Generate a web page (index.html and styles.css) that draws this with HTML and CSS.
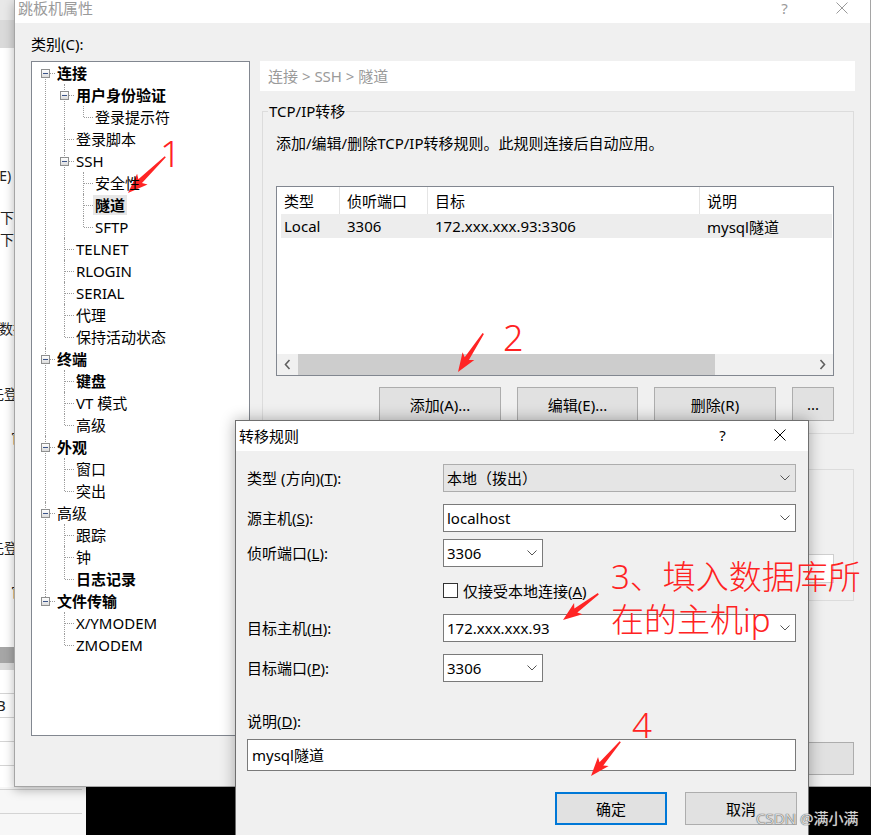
FILE: index.html
```html
<!DOCTYPE html>
<html lang="zh-CN">
<head>
<meta charset="utf-8">
<title>跳板机属性</title>
<link rel="stylesheet" href="styles.css">
</head>
<body>
<div class="desktop">
  <div class="bgapp">
    <div class="bg-cap1"></div>
    <div class="bg-cap2"></div>
    <div class="frag f-e">(E)</div>
    <div class="frag f-x1">下载</div>
    <div class="frag f-x2">下载</div>
    <div class="frag f-sj">数据</div>
    <div class="frag f-dl1">先登录</div>
    <div class="frag f-g1">官网</div>
    <div class="frag f-dl2">先登录</div>
    <div class="frag f-g2">官网</div>
    <div class="bg-band"></div>
    <div class="bg-band2"></div>
    <div class="bg-trow"></div>
    <div class="bg-trow bg-b">B</div>
    <div class="bg-trow"></div>
    <div class="bg-trow"></div>
  </div>
  <div class="bottom-strip">
    <div class="bs-left"><div class="bs-l1"></div><div class="bs-l2"></div></div>
    <div class="bs-black"></div>
  </div>

  <section class="win main-win">
    <header class="titlebar">
      <span class="title">跳板机属性</span>
      <span class="capbtn help">?</span>
      <span class="capbtn close"><svg width="12" height="12" viewBox="0 0 12 12"><path d="M0.5 0.5L11.5 11.5M11.5 0.5L0.5 11.5" stroke="#9a9a9a" stroke-width="1" fill="none"/></svg></span>
    </header>
    <div class="main-client">
      <div class="left-col">
        <div class="cat-label">类别(C):</div>
        <div class="tree">
          <ul class="tree-root">
            <li><div class="node"><span class="gut"><span class="exp"></span></span><span class="lbl b">连接</span></div>
              <ul>
                <li><div class="node"><span class="gut"><span class="exp"></span></span><span class="lbl b">用户身份验证</span></div>
                  <ul>
                    <li><div class="node"><span class="gut"></span><span class="lbl">登录提示符</span></div></li>
                  </ul>
                </li>
                <li><div class="node"><span class="gut"></span><span class="lbl">登录脚本</span></div></li>
                <li><div class="node"><span class="gut"><span class="exp"></span></span><span class="lbl">SSH</span></div>
                  <ul>
                    <li><div class="node"><span class="gut"></span><span class="lbl">安全性</span></div></li>
                    <li><div class="node"><span class="gut"></span><span class="lbl b sel">隧道</span></div></li>
                    <li><div class="node"><span class="gut"></span><span class="lbl">SFTP</span></div></li>
                  </ul>
                </li>
                <li><div class="node"><span class="gut"></span><span class="lbl">TELNET</span></div></li>
                <li><div class="node"><span class="gut"></span><span class="lbl">RLOGIN</span></div></li>
                <li><div class="node"><span class="gut"></span><span class="lbl">SERIAL</span></div></li>
                <li><div class="node"><span class="gut"></span><span class="lbl">代理</span></div></li>
                <li><div class="node"><span class="gut"></span><span class="lbl">保持活动状态</span></div></li>
              </ul>
            </li>
            <li><div class="node"><span class="gut"><span class="exp"></span></span><span class="lbl b">终端</span></div>
              <ul>
                <li><div class="node"><span class="gut"></span><span class="lbl b">键盘</span></div></li>
                <li><div class="node"><span class="gut"></span><span class="lbl">VT 模式</span></div></li>
                <li><div class="node"><span class="gut"></span><span class="lbl">高级</span></div></li>
              </ul>
            </li>
            <li><div class="node"><span class="gut"><span class="exp"></span></span><span class="lbl b">外观</span></div>
              <ul>
                <li><div class="node"><span class="gut"></span><span class="lbl">窗口</span></div></li>
                <li><div class="node"><span class="gut"></span><span class="lbl">突出</span></div></li>
              </ul>
            </li>
            <li><div class="node"><span class="gut"><span class="exp"></span></span><span class="lbl">高级</span></div>
              <ul>
                <li><div class="node"><span class="gut"></span><span class="lbl">跟踪</span></div></li>
                <li><div class="node"><span class="gut"></span><span class="lbl">钟</span></div></li>
                <li><div class="node"><span class="gut"></span><span class="lbl b">日志记录</span></div></li>
              </ul>
            </li>
            <li><div class="node"><span class="gut"><span class="exp"></span></span><span class="lbl b">文件传输</span></div>
              <ul>
                <li><div class="node"><span class="gut"></span><span class="lbl">X/YMODEM</span></div></li>
                <li><div class="node"><span class="gut"></span><span class="lbl">ZMODEM</span></div></li>
              </ul>
            </li>
          </ul>
        </div>
      </div>
      <div class="right-col">
        <div class="crumb">连接 &gt; SSH &gt; 隧道</div>
        <fieldset class="group g1">
          <legend>TCP/IP转移</legend>
          <p class="desc">添加/编辑/删除TCP/IP转移规则。此规则连接后自动应用。</p>
          <div class="listview">
            <div class="lv-head">
              <span class="c1">类型</span><span class="c2">侦听端口</span><span class="c3">目标</span><span class="c4">说明</span>
            </div>
            <div class="lv-row">
              <span class="c1">Local</span><span class="c2">3306</span><span class="c3">172.xxx.xxx.93:3306</span><span class="c4">mysql隧道</span>
            </div>
            <div class="lv-fill"></div>
            <div class="hscroll">
              <span class="sb-arrow"><svg width="7" height="11" viewBox="0 0 7 11"><path d="M5.5 1L1.5 5.5L5.5 10" stroke="#606060" stroke-width="1.6" fill="none"/></svg></span>
              <span class="sb-thumb"></span>
              <span class="sb-track"></span>
              <span class="sb-arrow"><svg width="7" height="11" viewBox="0 0 7 11"><path d="M1.5 1L5.5 5.5L1.5 10" stroke="#606060" stroke-width="1.6" fill="none"/></svg></span>
            </div>
          </div>
          <div class="btn-row">
            <button class="btn w122">添加(A)...</button>
            <button class="btn w121">编辑(E)...</button>
            <button class="btn w122">删除(R)</button>
            <button class="btn w42">...</button>
          </div>
        </fieldset>
        <fieldset class="group g2">
          <div class="g2-box"></div>
        </fieldset>
        <div class="main-foot">
          <button class="btn foot-btn">取消</button>
        </div>
      </div>
    </div>
  </section>

  <section class="win dialog">
    <header class="dlg-title">
      <span class="title">转移规则</span>
      <span class="capbtn help">?</span>
      <span class="capbtn close"><svg width="12" height="12" viewBox="0 0 12 12"><path d="M0.5 0.5L11.5 11.5M11.5 0.5L0.5 11.5" stroke="#000" stroke-width="1" fill="none"/></svg></span>
    </header>
    <div class="dlg-body">
      <div class="frow r1">
        <span class="flabel">类型 (方向)(<u>T</u>):</span>
        <span class="combo wide disabled"><span class="ctext">本地（拨出）</span><svg class="chev" width="10" height="6" viewBox="0 0 10 6"><path d="M0.5 0.5L5 5L9.5 0.5" stroke="#555" stroke-width="1" fill="none"/></svg></span>
      </div>
      <div class="frow r2">
        <span class="flabel">源主机(<u>S</u>):</span>
        <span class="combo wide"><span class="ctext">localhost</span><svg class="chev" width="10" height="6" viewBox="0 0 10 6"><path d="M0.5 0.5L5 5L9.5 0.5" stroke="#555" stroke-width="1" fill="none"/></svg></span>
      </div>
      <div class="frow r3">
        <span class="flabel">侦听端口(<u>L</u>):</span>
        <span class="combo small"><span class="ctext">3306</span><svg class="chev" width="10" height="6" viewBox="0 0 10 6"><path d="M0.5 0.5L5 5L9.5 0.5" stroke="#555" stroke-width="1" fill="none"/></svg></span>
      </div>
      <div class="frow r4">
        <span class="flabel"></span>
        <span class="check"><span class="cbox"></span><span class="clabel">仅接受本地连接(<u>A</u>)</span></span>
      </div>
      <div class="frow r5">
        <span class="flabel">目标主机(<u>H</u>):</span>
        <span class="combo wide"><span class="ctext">172.xxx.xxx.93</span><svg class="chev" width="10" height="6" viewBox="0 0 10 6"><path d="M0.5 0.5L5 5L9.5 0.5" stroke="#555" stroke-width="1" fill="none"/></svg></span>
      </div>
      <div class="frow r6">
        <span class="flabel">目标端口(<u>P</u>):</span>
        <span class="combo small"><span class="ctext">3306</span><svg class="chev" width="10" height="6" viewBox="0 0 10 6"><path d="M0.5 0.5L5 5L9.5 0.5" stroke="#555" stroke-width="1" fill="none"/></svg></span>
      </div>
      <div class="desc-label">说明(<u>D</u>):</div>
      <div class="textfield">mysql隧道</div>
      <div class="dlg-btns">
        <button class="btn dbtn default">确定</button>
        <button class="btn dbtn">取消</button>
      </div>
    </div>
  </section>

  <svg class="marks" width="871" height="835" viewBox="0 0 871 835" aria-hidden="true">
    <g fill="#ff2424">
      <polygon transform="translate(128 193) rotate(135.8)" points="-52,-0.8 -17,-2.6 -20,-7.5 0,0 -20,7.5 -17,2.6 -52,0.8"/>
      <polygon transform="translate(458 372) rotate(123.3)" points="-46,-0.8 -16,-2.5 -19,-7 0,0 -19,7 -16,2.5 -46,0.8"/>
      <polygon transform="translate(563 620) rotate(143.4)" points="-44,-0.8 -16,-2.5 -19,-7 0,0 -19,7 -16,2.5 -44,0.8"/>
      <polygon transform="translate(591 776) rotate(130.5)" points="-45,-0.8 -16,-2.5 -19,-7 0,0 -19,7 -16,2.5 -45,0.8"/>
    </g>
  </svg>
  <div class="note n1">1</div>
  <div class="note n2">2</div>
  <div class="note n3">3、填入数据库所<br>在的主机ip</div>
  <div class="note n4">4</div>
  <div class="watermark">CSDN @满小满</div>
</div>
</body>
</html>
```

FILE: styles.css
```css
* { box-sizing: border-box; }
html, body { margin: 0; padding: 0; }
body {
  width: 871px;
  height: 835px;
  overflow: hidden;
  background: #fff;
  font-family: "Noto Sans", "Noto Sans CJK SC", sans-serif;
  font-size: 15px;
  color: #000;
}
.desktop {
  position: relative;
  width: 871px;
  height: 835px;
  display: flex;
  flex-direction: column;
  overflow: hidden;
}

/* background application (behind windows) */
.bgapp {
  height: 787px;
  flex: none;
  display: flex;
  flex-direction: column;
  background: #fff;
  font-size: 14px;
  line-height: 22px;
  color: #222;
}
.bg-cap1 { height: 20px; background: #e8e8e8; }
.bg-cap2 { height: 28px; background: #dadada; }
.frag { height: 22px; white-space: nowrap; }
.f-e { margin-top: 117px; text-indent: -5px; }
.f-x1 { margin-top: 20px; }
.f-sj { margin-top: 67px; text-indent: -1px; }
.f-dl1 { margin-top: 43px; text-indent: -10px; }
.f-g1 { margin-top: 22px; text-indent: 11px; }
.f-dl2 { margin-top: 88px; text-indent: -10px; }
.f-g2 { margin-top: 22px; text-indent: 11px; }
.bg-band { margin-top: 44px; height: 16px; background: #a6a6a6; }
.bg-band2 { height: 7px; background: #dcdcdc; }
.bg-trow { height: 24px; width: 82px; border-bottom: 1px solid #d4d4d4; }
.bg-b { text-indent: -4px; font-size: 15px; line-height: 23px; }

.bottom-strip { flex: 1; display: flex; }
.bs-left { width: 86px; background: #f7f7f7; }
.bs-l1 { width: 82px; height: 3px; border-bottom: 1px solid #d4d4d4; }
.bs-l2 { width: 82px; height: 24px; border-bottom: 1px solid #d4d4d4; }
.bs-black { flex: 1; background: #000; }

/* windows */
.win { position: absolute; display: flex; flex-direction: column; }
.capbtn {
  width: 57px;
  flex: none;
  display: flex;
  align-items: center;
  justify-content: center;
  font-size: 15px;
}

.main-win {
  left: 14px;
  top: 0;
  width: 857px;
  height: 787px;
  background: #f0f0f0;
  border: 1px solid #a5a5a5;
  border-top: none;
  box-shadow: 0 3px 10px rgba(0, 0, 0, 0.28);
}
.titlebar {
  height: 23px;
  flex: none;
  display: flex;
  align-items: flex-start;
  background: #fff;
  color: #9a9a9a;
}
.titlebar .title { flex: 1; padding-left: 3px; line-height: 16px; }
.titlebar .capbtn { height: 16px; }

.main-client {
  flex: 1;
  display: flex;
  gap: 10px;
  padding: 11px 15px 0 16px;
}
.left-col { width: 219px; flex: none; display: flex; flex-direction: column; }
.cat-label { line-height: 20px; height: 20px; margin-bottom: 7px; }
.tree {
  height: 675px;
  background: #fff;
  border: 1px solid #828790;
  overflow: hidden;
}

/* tree */
.tree ul { list-style: none; margin: 0; padding: 0; }
.tree ul ul { padding-left: 19px; }
.tree li { position: relative; }
.tree li::before {
  content: "";
  position: absolute;
  left: 13px;
  top: 0;
  bottom: 0;
  border-left: 1px dotted #9c9c9c;
}
.tree li:last-child::before { bottom: auto; height: 11px; }
.tree-root > li:first-child::before { top: 11px; }
.node {
  position: relative;
  height: 22px;
  display: flex;
  align-items: center;
  white-space: nowrap;
}
.node::after {
  content: "";
  position: absolute;
  left: 14px;
  top: 11px;
  width: 9px;
  border-top: 1px dotted #9c9c9c;
}
.gut { width: 23px; flex: none; display: flex; align-items: center; }
.exp {
  position: relative;
  z-index: 1;
  margin-left: 9px;
  width: 9px;
  height: 9px;
  border: 1px solid #8e8f8f;
  background: linear-gradient(#ffffff, #dcdcdc);
  display: flex;
  align-items: center;
  justify-content: center;
}
.exp::after { content: ""; width: 5px; height: 1px; background: #3b5488; }
.lbl {
  position: relative;
  z-index: 1;
  padding: 0 2px;
  line-height: 20px;
  height: 20px;
}
.lbl.b { font-weight: 700; }
.lbl.sel { background: #e6e6e6; }

/* right column */
.right-col { width: 595px; flex: none; display: flex; flex-direction: column; }
.crumb {
  margin-top: 27px;
  height: 30px;
  line-height: 30px;
  background: #fff;
  padding-left: 8px;
  color: #9a9a9a;
}
.group {
  margin: 0 0 0 2px;
  width: 592px;
  border: 1px solid #dcdcdc;
  min-inline-size: 0;
}
.g1 { margin-top: 10px; padding: 0 19px 12px 13px; }
.g1 legend { margin-left: -8px; padding: 0 1px; line-height: 20px; }
.desc { margin: 12px 0 0 0; line-height: 20px; }

.listview {
  margin-top: 33px;
  height: 190px;
  background: #fff;
  border: 1px solid #828790;
  display: flex;
  flex-direction: column;
}
.lv-head, .lv-row { display: flex; white-space: nowrap; }
.lv-head { height: 27px; align-items: center; }
.lv-head span { height: 100%; display: flex; align-items: center; padding-left: 7px; border-right: 1px solid #e5e5e5; }
.lv-head .c1 { width: 63px; }
.lv-head .c2 { width: 88px; }
.lv-head .c3 { width: 272px; }
.lv-head .c4 { flex: 1; border-right: none; }
.lv-row { height: 24px; align-items: center; margin: 0 1px 0 4px; background: #ededed; }
.lv-row span { padding-left: 7px; }
.lv-row .c1 { width: 59px; padding-left: 3px; }
.lv-row .c2 { width: 88px; }
.lv-row .c3 { width: 272px; }
.lv-row .c4 { flex: 1; }
.lv-fill { flex: 1; }
.hscroll { height: 21px; display: flex; background: #f0f0f0; }
.sb-arrow { width: 21px; flex: none; display: flex; align-items: center; justify-content: center; }
.sb-thumb { width: 417px; flex: none; background: #cdcdcd; }
.sb-track { flex: 1; }

.btn {
  font-family: inherit;
  font-size: 15px;
  color: #000;
  background: #e1e1e1;
  border: 1px solid #adadad;
  padding: 0;
  margin: 0;
}
.btn-row { margin-top: 11px; display: flex; justify-content: flex-end; gap: 16px; }
.btn-row .btn { height: 34px; }
.w122 { width: 122px; }
.w121 { width: 121px; }
.w42 { width: 42px; }

.g2 { margin-top: 35px; height: 132px; padding: 84px 19px 0 0; display: flex; justify-content: flex-end; align-items: flex-start; }
.g2-box { width: 134px; height: 29px; background: #fff; border: 1px solid #cfcfcf; }
.main-foot { margin-top: 141px; display: flex; justify-content: flex-end; padding-right: 1px; }
.foot-btn { width: 140px; height: 33px; }

/* dialog */
.dialog {
  left: 235px;
  top: 420px;
  width: 574px;
  height: 430px;
  background: #f0f0f0;
  border: 1px solid #6f6f6f;
  box-shadow: 0 0 14px rgba(0, 0, 0, 0.32);
}
.dlg-title { height: 30px; flex: none; display: flex; align-items: center; background: #fff; }
.dlg-title .title { flex: 1; padding-left: 3px; line-height: 30px; }
.dlg-title .capbtn { height: 30px; padding-bottom: 2px; }
.dlg-body { padding: 13px 0 0 11px; display: flex; flex-direction: column; }
.frow { display: grid; grid-template-columns: 196px auto; align-items: center; justify-items: start; }
.flabel { line-height: 20px; white-space: nowrap; }
.r2 { margin-top: 12px; }
.r3 { margin-top: 7px; }
.r4 { margin-top: 16px; }
.r5 { margin-top: 16px; }
.r6 { margin-top: 12px; }
.combo {
  height: 28px;
  display: flex;
  align-items: center;
  background: #fff;
  border: 1px solid #7a7a7a;
  padding-left: 3px;
}
.combo.wide { width: 353px; }
.combo.small { width: 100px; }
.combo.disabled { background: #e5e5e5; border-color: #adadad; }
.ctext { flex: 1; white-space: nowrap; line-height: 20px; }
.chev { margin-right: 5px; flex: none; }
.check { display: flex; align-items: center; height: 15px; }
.cbox { width: 15px; height: 15px; border: 1px solid #333; background: #fff; flex: none; }
.clabel { margin-left: 5px; line-height: 20px; white-space: nowrap; }
.desc-label { margin-top: 29px; line-height: 20px; }
.textfield {
  margin-top: 8px;
  width: 549px;
  height: 32px;
  background: #fff;
  border: 1px solid #7a7a7a;
  padding-left: 4px;
  line-height: 30px;
}
.dlg-btns { margin-top: 21px; width: 550px; display: flex; justify-content: flex-end; gap: 18px; }
.dbtn { width: 112px; height: 33px; }
.dbtn.default { border: 2px solid #0078d7; }

/* annotations overlay */
.marks { position: absolute; left: 0; top: 0; pointer-events: none; }
.note {
  position: absolute;
  color: #ff2222;
  font-weight: 300;
  white-space: nowrap;
  pointer-events: none;
}
.n1 { left: 160px; top: 134px; font-size: 37px; line-height: 37px; }
.n2 { left: 503px; top: 320px; font-size: 36px; line-height: 36px; }
.n4 { left: 632px; top: 707px; font-size: 35px; line-height: 35px; }
.n3 { left: 611px; top: 555px; font-size: 33px; line-height: 43px; }
.watermark {
  position: absolute;
  left: 756px;
  top: 808px;
  font-size: 15px;
  line-height: 20px;
  color: rgba(235, 235, 235, 0.9);
  text-shadow: 0 0 1px #555, 0 0 1px #555;
  white-space: nowrap;
}
```
